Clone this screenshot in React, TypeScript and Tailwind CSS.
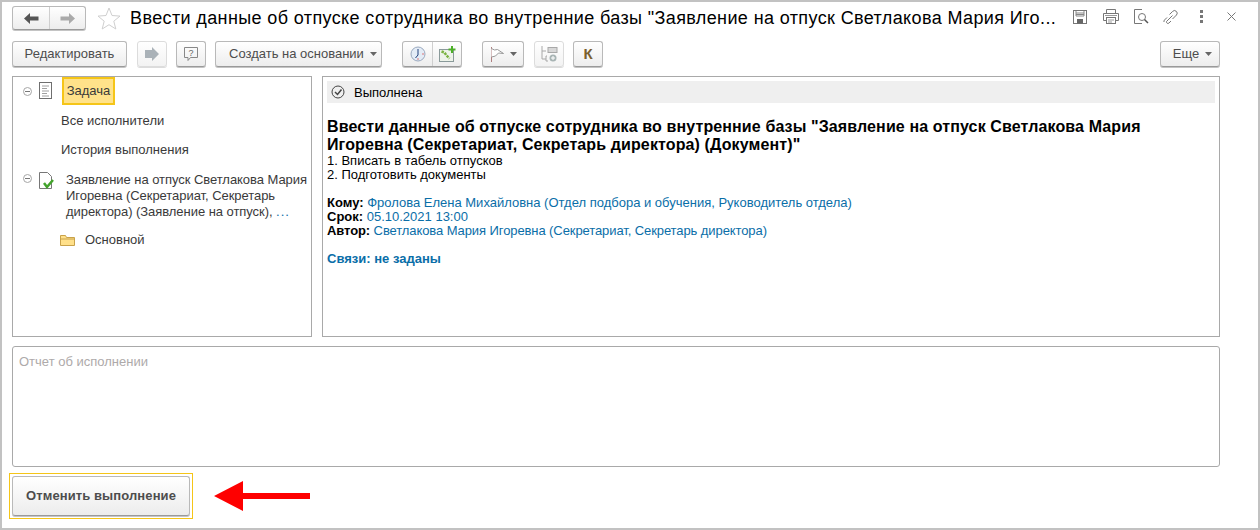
import React from "react";

const btn =
  "flex items-center justify-center h-[26px] rounded-[3px] border border-[#b9b9b9] border-b-[#9a9a9a] bg-gradient-to-b from-white to-[#ededed] shadow-[0_1px_0_#c4c4c4] text-[#4d4d4d] text-[13px]";

const Caret = () => (
  <svg width="7" height="4" viewBox="0 0 7 4" className="shrink-0">
    <path d="M0 0h7L3.5 4z" fill="#666" />
  </svg>
);

const DocIcon = () => (
  <svg width="14" height="18" viewBox="0 0 14 18" fill="none">
    <rect x="0.5" y="0.5" width="12" height="16" fill="#fff" stroke="#6f6f6f" />
    <path d="M3 4h7M3 6.5h5M3 9h7M3 11.5h5M3 14h7" stroke="#a0a0a0" />
  </svg>
);

const MinusCircle = () => (
  <svg width="9" height="9" viewBox="0 0 9 9" fill="none">
    <circle cx="4.5" cy="4.5" r="4" stroke="#a6a6a6" />
    <path d="M2 4.5h5" stroke="#777" />
  </svg>
);

export default function App() {
  return (
    <div className="w-[1260px] h-[530px] overflow-hidden bg-white border-2 border-[#c2c2c2] font-['Liberation_Sans',Arial,sans-serif] text-[13px] text-black flex flex-col pl-[10px] pr-[38px]">
      {/* title row */}
      <div className="flex items-center h-[24px] mt-[4px] relative w-[1208px]">
        <div className="flex h-[24px] w-[74px] rounded-[3px] border border-[#b9b9b9] border-b-[#9a9a9a] bg-gradient-to-b from-white to-[#ededed] shadow-[0_1px_0_#c4c4c4]">
          <div className="w-[37px] flex items-center justify-center border-r border-[#cfcfcf]">
            <svg width="15" height="11" viewBox="0 0 15 11"><path d="M0 5.5L6 0v3.500h8.500v4H6V11z" fill="#555" /></svg>
          </div>
          <div className="flex-1 flex items-center justify-center">
            <svg width="15" height="11" viewBox="0 0 15 11"><path d="M15 5.500L9 0v3.500H.5v4H9V11z" fill="#aaa" /></svg>
          </div>
        </div>
        <svg width="24" height="23" viewBox="0 0 24 23" fill="none" className="ml-[11px] shrink-0">
          <path d="M12 1l3 7.500 8 .6-6.200 5.100 2 7.800L12 17.700 5.200 22l2-7.800L1 9.100l8-.6z" fill="#fff" stroke="#cfcfcf" />
        </svg>
        <div className="ml-[9px] text-[18px] leading-[24px] whitespace-nowrap tracking-[0.38px]">
          Ввести данные об отпуске сотрудника во внутренние базы "Заявление на отпуск Светлакова Мария Иго...
        </div>
        <div className="absolute right-[-16px] top-[2px] flex items-center text-[#777]">
          <svg width="16" height="16" viewBox="0 0 16 16" fill="none" className="mr-[14px]">
            <rect x="1.500" y="1.500" width="13" height="13" stroke="#777" />
            <path d="M4 2v5h8V2M4 4h8M4 5.500h8" stroke="#888" />
            <rect x="5" y="10" width="6" height="4.500" fill="#666" />
          </svg>
          <svg width="18" height="17" viewBox="0 0 18 17" fill="none" className="mr-[13px]">
            <path d="M4.500 5V1.500h9V5M4.500 12.500h-3v-7h15v7h-3" stroke="#777" />
            <rect x="4.500" y="9.500" width="9" height="6" fill="#fff" stroke="#777" />
            <path d="M6 12h6M6 14h4M3 7.500h12" stroke="#999" />
          </svg>
          <svg width="16" height="17" viewBox="0 0 16 17" fill="none" className="mr-[14px]">
            <path d="M9 1.500H1.500v14H9" stroke="#777" />
            <circle cx="9" cy="9" r="3.500" stroke="#777" />
            <path d="M11.500 11.500L15 15" stroke="#555" strokeWidth="1.500" />
          </svg>
          <svg width="16" height="16" viewBox="0 0 16 16" fill="none" className="mr-[21px]">
            <path d="M6.500 5.500l3-3a2.500 2.500 0 0 1 4 3.500l-4 4M9.500 6.500l-6 6a1.500 1.500 0 0 0 2.500 1.500l2-2M4 8.500l-2.500 2.500a2 2 0 0 0-.5 2" stroke="#777" />
          </svg>
          <div className="flex flex-col gap-[2px] mr-[24px]">
            <span className="w-[3px] h-[3px] bg-[#777]" />
            <span className="w-[3px] h-[3px] bg-[#777]" />
            <span className="w-[3px] h-[3px] bg-[#777]" />
          </div>
          <svg width="9" height="9" viewBox="0 0 9 9" fill="none">
            <path d="M.5.5l8 8M8.500.5l-8 8" stroke="#777" />
          </svg>
        </div>
      </div>

      {/* toolbar */}
      <div className="flex items-center h-[26px] mt-[11px] w-[1208px]">
        <div className={`${btn} w-[115px]`}>Редактировать</div>
        <div className="ml-[10px] w-[30px] h-[26px] rounded-[3px] border border-[#dcdcdc] bg-gradient-to-b from-white to-[#f3f3f3] shadow-[0_1px_0_#dcdcdc] flex items-center justify-center">
          <svg width="14" height="14" viewBox="0 0 14 14"><path d="M0 3h7V0l7 7-7 7v-3H0z" fill="#aab2b8" /></svg>
        </div>
        <div className={`${btn} ml-[9px] w-[30px]`}>
          <svg width="16" height="16" viewBox="0 0 16 16" fill="none">
            <path d="M1.500 1.500h13v10h-7l-2.500 3v-3H1.500z" stroke="#888" />
            <text x="8" y="9.500" fontSize="9" textAnchor="middle" fill="#666" fontFamily="Liberation Sans">?</text>
          </svg>
        </div>
        <div className={`${btn} ml-[9px] w-[167px] gap-[6px] !justify-start pl-[13px]`}>
          Создать на основании
          <Caret />
        </div>
        <div className="ml-[20px] flex h-[26px] w-[60px] rounded-[3px] border border-[#b9b9b9] border-b-[#9a9a9a] bg-gradient-to-b from-white to-[#ededed] shadow-[0_1px_0_#c4c4c4]">
          <div className="w-[30px] flex items-center justify-center border-r border-[#cfcfcf]">
            <svg width="16" height="16" viewBox="0 0 16 16" fill="none">
              <circle cx="8" cy="8" r="7" fill="#e4ecf6" stroke="#9aa9bf" />
              <path d="M8 3v6L5.500 12" stroke="#1f3f7a" />
              <circle cx="8" cy="13" r=".8" fill="#d66" />
              <circle cx="13" cy="8" r=".8" fill="#d66" />
            </svg>
          </div>
          <div className="flex-1 flex items-center justify-center">
            <svg width="17" height="16" viewBox="0 0 17 16" fill="none">
              <rect x=".5" y="3.500" width="14" height="12" fill="#eef3ea" stroke="#8a9a9a" />
              <path d="M2.500 5.500l3 1 2 3 3 3" stroke="#7cb342" strokeWidth="2.500" strokeDasharray="2.500 1" />
              <path d="M13 0v7M9.500 3.500h7" stroke="#4caf28" strokeWidth="2" />
            </svg>
          </div>
        </div>
        <div className={`${btn} ml-[20px] w-[42px] gap-[5px]`}>
          <svg width="15" height="16" viewBox="0 0 15 16" fill="none">
            <path d="M1.500 1v15" stroke="#b08080" />
            <path d="M1.500 2.500l3 1.500 3-.5 6 4-5-.5-3 3-4 1" fill="#fff" stroke="#999" />
          </svg>
          <Caret />
        </div>
        <div className="ml-[10px] w-[30px] h-[26px] rounded-[3px] border border-[#dcdcdc] bg-gradient-to-b from-white to-[#f3f3f3] shadow-[0_1px_0_#dcdcdc] flex items-center justify-center">
          <svg width="18" height="18" viewBox="0 0 18 18" fill="none">
            <path d="M2 1v13h4M2 6h4" stroke="#a8a8a8" />
            <rect x="8" y="2.500" width="9" height="5" fill="#d8d8d8" stroke="#a8a8a8" />
            <path d="M7 11H6v5h2" stroke="#a8a8a8" />
            <circle cx="13" cy="13" r="3.500" fill="#a8b4b4" />
            <path d="M11 13h4M13 11v4" stroke="#fff" />
          </svg>
        </div>
        <div className={`${btn} ml-[9px] w-[30px] !text-[15px] font-bold !text-[#7a5f2e]`}>К</div>
        <div className={`${btn} ml-auto w-[60px] gap-[6px] pl-[5px]`}>
          Еще
          <Caret />
        </div>
      </div>

      {/* panels */}
      <div className="flex gap-[10px] mt-[9px] h-[261px] w-[1208px]">
        <div className="w-[300px] border border-[#a9a9a9] flex flex-col text-[#3a3a3a]">
          <div className="flex items-center h-[28px] pl-[10px]">
            <MinusCircle />
            <span className="ml-[7px]"><DocIcon /></span>
            <span className="ml-[9px] h-[28px] w-[53px] flex items-center justify-center bg-[#ffe28a] border-[2px] border-[#f5c518]">Задача</span>
          </div>
          <div className="pl-[48px] mt-[9px] leading-[14px] h-[29px]">Все исполнители</div>
          <div className="pl-[48px] leading-[14px] h-[29px]">История выполнения</div>
          <div className="flex pl-[10px]">
            <span className="mt-[2px]"><MinusCircle /></span>
            <span className="ml-[7px]">
              <svg width="16" height="18" viewBox="0 0 16 18" fill="none">
                <path d="M.5.500h8l4 4v12H.5z" fill="#fff" stroke="#777" />
                <path d="M5 11l3 4 6-7" stroke="#43a32c" strokeWidth="2.500" />
              </svg>
            </span>
            <div className="ml-[11px] leading-[16px] w-[246px] whitespace-nowrap tracking-[-0.05px]">
              Заявление на отпуск Светлакова Мария
              <br />
              Игоревна (Секретариат, Секретарь
              <br />
              директора) (Заявление на отпуск), <span className="text-[#0a6ea8] tracking-[1px]">...</span>
            </div>
          </div>
          <div className="flex items-center pl-[47px] mt-[10px]">
            <svg width="15" height="12" viewBox="0 0 15 12" fill="none">
              <path d="M.5 11.500V1.500h5l1 2h8v8z" fill="#ffe08a" stroke="#c9a24a" />
              <path d="M.5 5h14" stroke="#c9a24a" />
            </svg>
            <span className="ml-[10px]">Основной</span>
          </div>
        </div>

        <div className="w-[898px] border border-[#a9a9a9] pt-[4px] px-[4px]">
          <div className="flex items-center h-[22px] bg-[#efefef] pl-[4px] mb-[1px]">
            <svg width="14" height="14" viewBox="0 0 14 14" fill="none">
              <circle cx="7" cy="7" r="6" stroke="#444" />
              <path d="M4 7l2.500 2.500L10.500 4.500" stroke="#444" strokeWidth="1.500" />
            </svg>
            <span className="ml-[9px] relative top-[1px]">Выполнена</span>
          </div>
          <div className="mt-[15px] text-[16px] leading-[18px] font-bold tracking-[0.115px]">
            Ввести данные об отпуске сотрудника во внутренние базы "Заявление на отпуск Светлакова Мария
            <br />
            Игоревна (Секретариат, Секретарь директора) (Документ)"
          </div>
          <div className="leading-[14px]">
            1. Вписать в табель отпусков
            <br />
            2. Подготовить документы
          </div>
          <div className="leading-[14px] mt-[14px] text-[#0a6ea8]">
            <div><b className="text-black">Кому:</b> Фролова Елена Михайловна (Отдел подбора и обучения, Руководитель отдела)</div>
            <div><b className="text-black">Срок:</b> 05.10.2021 13:00</div>
            <div className="tracking-[-0.09px]"><b className="text-black">Автор:</b> Светлакова Мария Игоревна (Секретариат, Секретарь директора)</div>
          </div>
          <div className="mt-[14px] leading-[14px] font-bold text-[#0a6ea8]">Связи: не заданы</div>
        </div>
      </div>

      {/* report */}
      <div className="mt-[9px] h-[121px] w-[1208px] rounded-[3px] border border-[#a9a9a9] pl-[6px] pt-[8px] text-[#aeaaaa] leading-[14px]">
        Отчет об исполнении
      </div>

      {/* bottom */}
      <div className="flex items-center mt-[6px] -ml-[3px]">
        <div className="p-[2px] border border-[#f5c518] w-[184px] h-[46px]">
          <div className="h-[40px] rounded-[3px] border border-[#b9b9b9] border-b-[#9a9a9a] bg-gradient-to-b from-white to-[#ececec] shadow-[0_1px_0_#c4c4c4] flex items-center justify-center text-[13px] font-bold tracking-[0.1px] text-[#4d4d4d]">
            Отменить выполнение
          </div>
        </div>
        <svg width="96" height="30" viewBox="0 0 96 30" className="ml-[21px]">
          <path d="M0 15L29 0v12h67v6H29v12z" fill="#fe0000" />
        </svg>
      </div>
    </div>
  );
}
